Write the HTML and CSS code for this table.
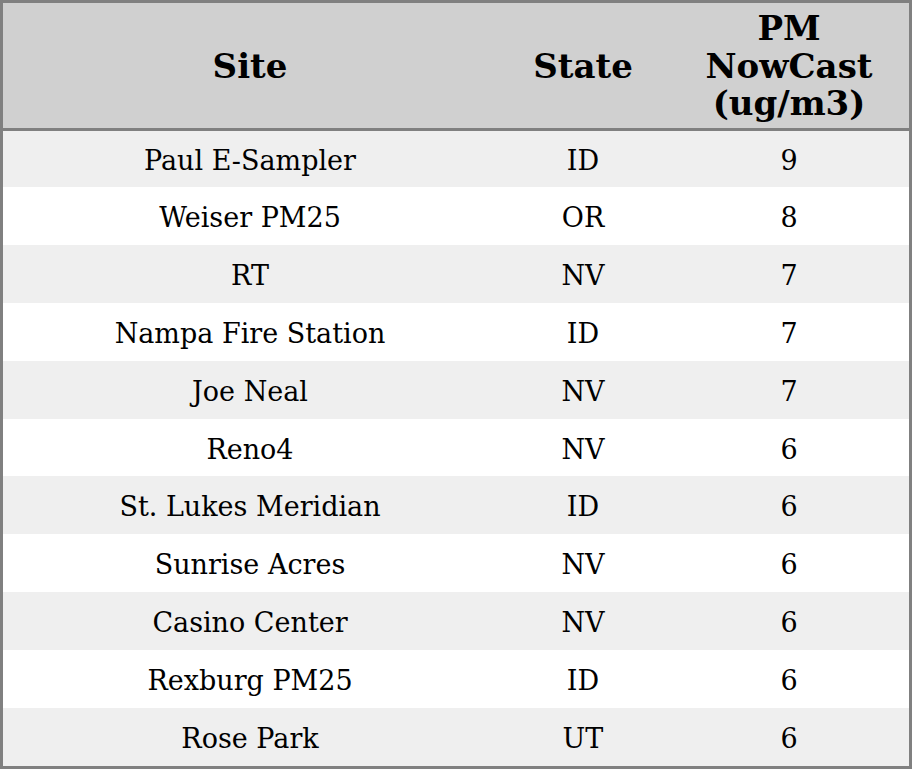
FILE: index.html
```html
<!DOCTYPE html>
<html>
<head>
<meta charset="utf-8">
<link rel="stylesheet" href="styles.css">
</head>
<body>
<table class="aq">
  <colgroup>
    <col class="c-site">
    <col class="c-state">
    <col class="c-pm">
  </colgroup>
  <thead>
    <tr><th>Site</th><th>State</th><th>PM NowCast (ug/m3)</th></tr>
  </thead>
  <tbody>
    <tr><td>Paul E-Sampler</td><td>ID</td><td>9</td></tr>
    <tr><td>Weiser PM25</td><td>OR</td><td>8</td></tr>
    <tr><td>RT</td><td>NV</td><td>7</td></tr>
    <tr><td>Nampa Fire Station</td><td>ID</td><td>7</td></tr>
    <tr><td>Joe Neal</td><td>NV</td><td>7</td></tr>
    <tr><td>Reno4</td><td>NV</td><td>6</td></tr>
    <tr><td>St. Lukes Meridian</td><td>ID</td><td>6</td></tr>
    <tr><td>Sunrise Acres</td><td>NV</td><td>6</td></tr>
    <tr><td>Casino Center</td><td>NV</td><td>6</td></tr>
    <tr><td>Rexburg PM25</td><td>ID</td><td>6</td></tr>
    <tr><td>Rose Park</td><td>UT</td><td>6</td></tr>
  </tbody>
</table>
</body>
</html>
```
FILE: styles.css
```css
html, body {
  margin: 0;
  padding: 0;
  background: #ffffff;
}
.aq {
  width: 912px;
  border-collapse: separate;
  border-spacing: 0;
  table-layout: fixed;
  border: 3px solid #808080;
  font-family: "DejaVu Serif", serif;
  color: #000;
}
.c-site { width: 494px; }
.c-state { width: 172px; }
.c-pm { width: 240px; }
.aq th {
  background: #d0d0d0;
  font-size: 34px;
  font-weight: bold;
  height: 123px;
  padding: 2px 0 0 0;
  text-align: center;
  vertical-align: middle;
  border-bottom: 3px solid #808080;
  line-height: 37.5px;
}
.aq td {
  font-size: 27px;
  height: 54.9px;
  padding: 3px 0 0 0;
  text-align: center;
  vertical-align: middle;
}
.aq tbody tr:first-child td { height: 53px; }
.aq tbody tr:nth-child(odd) td { background: #efefef; }
```
